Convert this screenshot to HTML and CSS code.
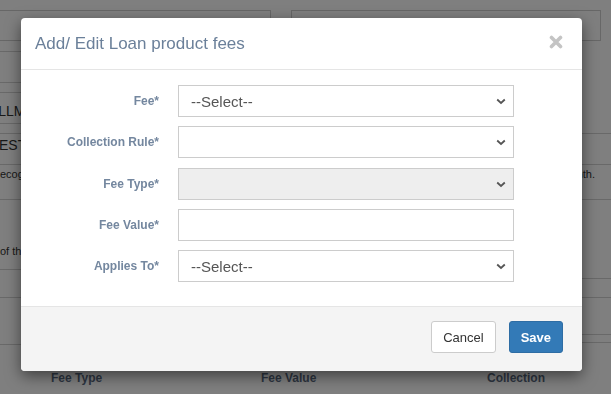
FILE: index.html
```html
<!DOCTYPE html>
<html lang="en">
<head>
    <meta charset="UTF-8">
    <meta name="viewport" content="width=device-width, initial-scale=1.0">
    <title>Loan product fees</title>
    <link rel="stylesheet" href="styles.css">
</head>
<body>
    <div class="page">
        <div class="top-fields">
            <div class="field field-left"></div>
            <div class="field field-right"></div>
        </div>
        <div class="bg-cols">
            <div class="bg-col bg-left">
                <div class="bg-row h11"></div>
                <div class="bg-row h31"></div>
                <div class="bg-row h10"></div>
                <div class="bg-row h31 caps indent-a top low">Installments</div>
                <div class="bg-row h10"></div>
                <div class="bg-row h31 caps indent-b top">Interest</div>
                <div class="bg-row h35 small indent-c top">Recognition</div>
                <div class="bg-row h70 small bottom">of the</div>
                <div class="bg-row h28"></div>
                <div class="bg-row h47"></div>
            </div>
            <div class="bg-col bg-right">
                <div class="bg-row h93"></div>
                <div class="bg-row h31"></div>
                <div class="bg-row h35 small top right">each month.</div>
                <div class="bg-row h79"></div>
                <div class="bg-row h19"></div>
                <div class="bg-row h37"></div>
                <div class="bg-row h8"></div>
            </div>
        </div>
        <div class="fee-head">
            <span>Fee Type</span>
            <span>Fee Value</span>
            <span>Collection</span>
        </div>
    </div>

    <div class="backdrop"></div>

    <div class="modal">
        <div class="modal-header">
            <h4 class="modal-title">Add/ Edit Loan product fees</h4>
            <button class="close" type="button">
                <svg width="14" height="14" viewBox="0 0 14 14">
                    <path d="M2.5 2.5 L11.5 11.5 M11.5 2.5 L2.5 11.5" stroke="#c4c4c4" stroke-width="3.6" stroke-linecap="round"/>
                </svg>
            </button>
        </div>
        <div class="modal-body">
            <div class="form-grid">
                <label>Fee*</label>
                <div class="select-wrap">
                    <select class="form-control"><option>--Select--</option></select>
                    <svg class="chev" width="10" height="7" viewBox="0 0 10 7"><path d="M1.2 1.5 L5 5 L8.8 1.5" fill="none" stroke="#555" stroke-width="1.8"/></svg>
                </div>

                <label>Collection Rule*</label>
                <div class="select-wrap">
                    <select class="form-control"><option></option></select>
                    <svg class="chev" width="10" height="7" viewBox="0 0 10 7"><path d="M1.2 1.5 L5 5 L8.8 1.5" fill="none" stroke="#555" stroke-width="1.8"/></svg>
                </div>

                <label>Fee Type*</label>
                <div class="select-wrap">
                    <select class="form-control" disabled><option></option></select>
                    <svg class="chev" width="10" height="7" viewBox="0 0 10 7"><path d="M1.2 1.5 L5 5 L8.8 1.5" fill="none" stroke="#555" stroke-width="1.8"/></svg>
                </div>

                <label>Fee Value*</label>
                <input class="form-control" type="text">

                <label>Applies To*</label>
                <div class="select-wrap">
                    <select class="form-control"><option>--Select--</option></select>
                    <svg class="chev" width="10" height="7" viewBox="0 0 10 7"><path d="M1.2 1.5 L5 5 L8.8 1.5" fill="none" stroke="#555" stroke-width="1.8"/></svg>
                </div>
            </div>
        </div>
        <div class="modal-footer">
            <button class="btn btn-default" type="button">Cancel</button>
            <button class="btn btn-primary" type="button">Save</button>
        </div>
    </div>
</body>
</html>
```

FILE: styles.css
```css
* {
    box-sizing: border-box;
}
body {
    margin: 0;
    font-family: 'Liberation Sans', Arial, sans-serif;
    color: #333;
    background: #fff;
    overflow: hidden;
}
.page {
    padding-top: 10px;
}
.top-fields {
    display: flex;
    gap: 20px;
}
.field {
    height: 31px;
    border: 1px solid #cfcfcf;
}
.field-left {
    width: 272px;
    margin-left: -1px;
}
.field-right {
    width: 310px;
}
.bg-cols {
    display: flex;
}
.bg-left {
    width: 291px;
}
.bg-right {
    flex: 1;
}
.bg-row {
    border-bottom: 1px solid #d2d2d2;
    white-space: nowrap;
    overflow: hidden;
    display: flex;
    align-items: center;
}
.bg-row.top {
    align-items: flex-start;
    padding-top: 3px;
}
.bg-row.low {
    padding-top: 10px;
}
.bg-row.bottom {
    align-items: flex-end;
    padding-bottom: 12px;
}
.bg-row.right {
    justify-content: flex-end;
    padding-right: 16px;
}
.caps {
    text-transform: uppercase;
    font-size: 14px;
}
.small {
    font-size: 11px;
}
.indent-a { text-indent: -42px; }
.indent-b { text-indent: -43px; }
.indent-c { text-indent: -8px; }
.h8 { height: 8px; }
.h10 { height: 10px; }
.h11 { height: 11px; }
.h19 { height: 19px; }
.h28 { height: 28px; }
.h31 { height: 31px; }
.h35 { height: 35px; }
.h37 { height: 37px; }
.h47 { height: 47px; }
.h70 { height: 70px; }
.h79 { height: 79px; }
.h93 { height: 93px; }
.fee-head {
    display: grid;
    grid-template-columns: 210px 226px 1fr;
    padding: 26px 0 0 51px;
    font-size: 12px;
    font-weight: bold;
    color: #5b6b82;
}

.backdrop {
    position: fixed;
    inset: 0;
    background: rgba(0,0,0,0.5);
}
.modal {
    position: absolute;
    top: 18px;
    left: 21px;
    width: 561px;
    background: #fff;
    border-radius: 4px;
    box-shadow: 0 5px 15px rgba(0,0,0,0.5);
    overflow: hidden;
}
.modal-header {
    height: 52px;
    display: flex;
    align-items: center;
    justify-content: space-between;
    padding: 0 19px 0 14px;
    border-bottom: 1px solid #e5e5e5;
}
.modal-title {
    margin: 0;
    font-size: 17px;
    font-weight: normal;
    color: #6b809a;
}
.close {
    border: 0;
    background: none;
    padding: 0;
    margin-top: -4px;
    display: flex;
}
.modal-body {
    padding: 15px 20px 24px;
}
.form-grid {
    display: grid;
    grid-template-columns: 118px 336px;
    column-gap: 19px;
    row-gap: 9.25px;
    align-items: center;
}
.form-grid label {
    text-align: right;
    font-size: 12px;
    font-weight: bold;
    color: #74879f;
}
.form-control {
    display: block;
    width: 100%;
    height: 32px;
    margin: 0;
    padding: 0 12px;
    border: 1px solid #ccc;
    border-radius: 0;
    background: #fff;
    font-family: inherit;
    font-size: 15px;
    color: #555;
    appearance: none;
    outline: none;
}
.form-control:disabled {
    background: #eee;
    opacity: 1;
}
.select-wrap {
    position: relative;
}
.chev {
    position: absolute;
    right: 8px;
    top: 13px;
}
.modal-footer {
    display: flex;
    justify-content: flex-end;
    gap: 13px;
    padding: 14px 19px 18px;
    background: #f4f4f4;
    border-top: 1px solid #e5e5e5;
}
.btn {
    height: 32px;
    padding: 0 11px;
    font-family: inherit;
    font-size: 13px;
    border: 1px solid #ccc;
    border-radius: 3px;
    cursor: pointer;
}
.btn-default {
    background: #fff;
    color: #333;
}
.btn-primary {
    background: #337ab7;
    border-color: #2e6da4;
    color: #fff;
    font-weight: bold;
}
```
